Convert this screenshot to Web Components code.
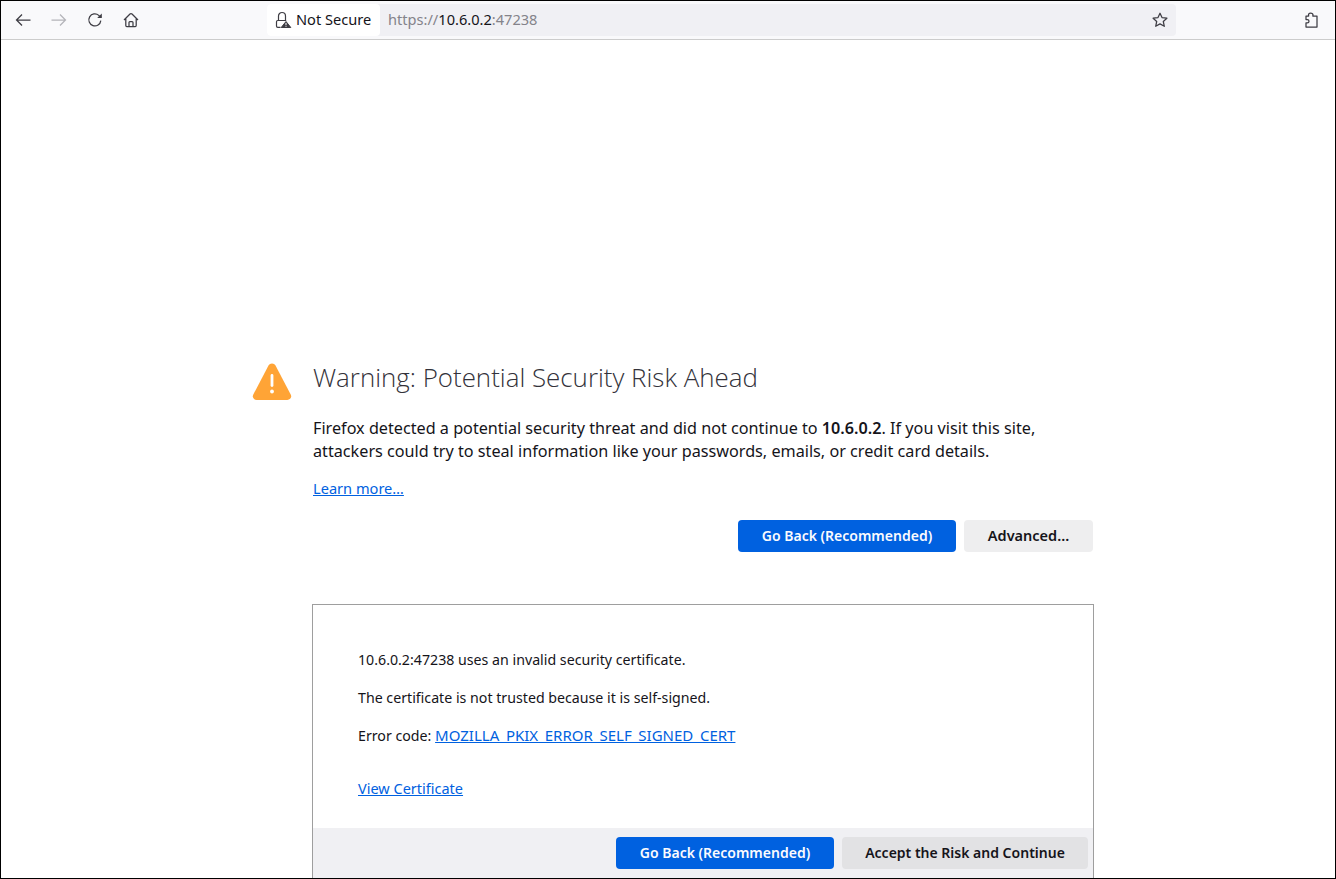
<!DOCTYPE html>
<html>
<head>
<meta charset="utf-8">
<title>Warning: Potential Security Risk Ahead</title>
<style>
    html, body { margin: 0; height: 100%; background: #fff; }
    body { overflow: hidden; }
</style>
</head>
<body>
<browser-window>
    <browser-toolbar></browser-toolbar>
    <warning-page></warning-page>
</browser-window>

<script>
class BrowserWindow extends HTMLElement {
    constructor() {
        super();
        this.attachShadow({mode: 'open'});
        this.shadowRoot.innerHTML = `
<style>
    :host {
        display: flex;
        flex-direction: column;
        box-sizing: border-box;
        height: 879px;
        border: 1px solid #000;
        overflow: hidden;
        background: #fff;
    }
</style>
<slot></slot>`;
    }
}

const toolIcons = {
    back: '<path d="M15.500 8H1.500M7 2.500 1.500 8 7 13.500"/>',
    forward: '<path d="M.5 8h14M9 2.500 14.500 8 9 13.500"/>',
    reload: '<path d="M13.800 8.600A6 6 0 1 1 11.800 3.400L14 5.200"/><path d="M14.800 1.400v4.600H10.200" fill="currentColor" stroke="none"/>',
    home: '<path d="M1 8 7 2a1.400 1.400 0 0 1 2 0l6 6M2.800 6.500v7.100c0 .6.4 1 1 1h8.400c.6 0 1-.4 1-1V6.500"/><path d="M6 14.500v-4c0-.5.4-.9.9-.9h2.200c.5 0 .9.4.9.9v4"/>',
    star: '<path d="M8 1.200 10 5.600 14.900 6.200 11.300 9.500 12.300 14.300 8 11.900 3.700 14.300 4.700 9.500 1.100 6.200 6 5.600Z" stroke-linejoin="round"/>',
    puzzle: '<path d="M7.500 1c-1.200 0-2 .9-2 2 0 .4.1.7.2 1H3v3.600h1.300c1 0 1.700.7 1.700 1.600s-.7 1.600-1.700 1.600H3V15h11V4H9.800c.1-.3.2-.6.2-1 0-1.100-.9-2-2.500-2Z" stroke-linejoin="round"/>'
};

class ToolIcon extends HTMLElement {
    constructor() {
        super();
        this.attachShadow({mode: 'open'});
        const name = this.getAttribute('name');
        this.shadowRoot.innerHTML = `
<style>
    :host {
        display: flex;
        align-items: center;
        justify-content: center;
        width: 16px;
        height: 16px;
        color: #3e3d44;
    }
    :host([disabled]) { color: #b4b4b9; }
    svg { width: 16px; height: 16px; fill: none; stroke: currentColor; stroke-width: 1.25; }
</style>
<svg viewBox="0 0 16 16">${toolIcons[name]}</svg>`;
    }
}

class UrlBar extends HTMLElement {
    constructor() {
        super();
        this.attachShadow({mode: 'open'});
        this.shadowRoot.innerHTML = `
<style>
    :host {
        display: flex;
        align-items: center;
        box-sizing: border-box;
        width: 909px;
        height: 32px;
        margin-left: 128px;
        background: #f0f0f4;
        border-radius: 4px;
        font: 14.600px "Noto Sans", sans-serif;
    }
    .chip {
        display: flex;
        align-items: center;
        box-sizing: border-box;
        width: 113px;
        height: 32px;
        padding-left: 8px;
        gap: 4px;
        background: #fff;
        border-radius: 4px;
        color: #15141a;
        white-space: nowrap;
    }
    .chip svg { width: 17px; height: 17px; flex: none; }
    .chip span, .url { position: relative; top: -1px; }
    .url { margin-left: 8px; color: #84838a; white-space: nowrap; }
    .url b { font-weight: 400; color: #15141a; }
    .star { margin-left: auto; margin-right: 8px; }
</style>
<div class="chip">
    <svg viewBox="0 0 17 17">
        <path d="M5.500 16.400H2.800c-.8 0-1.300-.5-1.300-1.300v-4.300c0-.8.5-1.300 1.300-1.300h8.400" fill="none" stroke="#3e3d44" stroke-width="1.200"/>
        <path d="M3.500 9.500V5a3.500 3.500 0 0 1 7 0v4.500" fill="none" stroke="#3e3d44" stroke-width="1.200"/>
        <path d="M11 10.500 15.800 16.500H6.200z" fill="#3e3d44" stroke="#3e3d44" stroke-linejoin="round"/>
        <path d="M11 12v2.300M11 15v.8" stroke="#fff" stroke-width="1"/>
    </svg>
    <span>Not Secure</span>
</div>
<span class="url">https://<b>10.6.0.2</b>:47238</span>
<tool-icon class="star" name="star"></tool-icon>`;
    }
}

class BrowserToolbar extends HTMLElement {
    constructor() {
        super();
        this.attachShadow({mode: 'open'});
        this.shadowRoot.innerHTML = `
<style>
    :host {
        display: flex;
        align-items: center;
        flex: none;
        box-sizing: border-box;
        height: 39px;
        padding: 0 16px 1px 14px;
        background: #f9f9fb;
        border-bottom: 1px solid #ccc;
    }
    .nav { display: flex; gap: 20px; }
    .ext { margin-left: auto; }
</style>
<div class="nav">
    <tool-icon name="back"></tool-icon>
    <tool-icon name="forward" disabled></tool-icon>
    <tool-icon name="reload"></tool-icon>
    <tool-icon name="home"></tool-icon>
</div>
<url-bar></url-bar>
<tool-icon class="ext" name="puzzle"></tool-icon>`;
    }
}

class ActionButton extends HTMLElement {
    constructor() {
        super();
        this.attachShadow({mode: 'open'});
        this.shadowRoot.innerHTML = `
<style>
    :host {
        display: flex;
        align-items: center;
        justify-content: center;
        box-sizing: border-box;
        height: 32px;
        padding-bottom: 2px;
        border-radius: 4px;
        background: #eeeeef;
        color: #15141a;
        font: 600 14px "Noto Sans", sans-serif;
        white-space: nowrap;
    }
    :host([primary]) { background: #0061e0; color: #fbfbfe; }
    :host([dim]) { background: #e2e2e4; }
</style>
<slot></slot>`;
    }
}

class CertPanel extends HTMLElement {
    constructor() {
        super();
        this.attachShadow({mode: 'open'});
        this.shadowRoot.innerHTML = `
<style>
    :host {
        display: block;
        box-sizing: border-box;
        width: 782px;
        margin: 52px 0 0 60px;
        border: 1px solid #9e9e9e;
        border-bottom: 0;
        font: 14.200px "Noto Sans", sans-serif;
        color: #15141a;
    }
    .body { padding: 46px 45px 0; height: 223px; box-sizing: border-box; }
    p { margin: 0 0 20px; line-height: 18px; }
    a { color: #0061e0; text-decoration: underline; }
    .err { margin-top: -1px; }
    .code { font-size: 15px; }
    .cert { margin-top: 34px; font-size: 14.500px; }
    .foot {
        display: flex;
        justify-content: flex-end;
        gap: 8px;
        height: 50px;
        padding: 9px 5px 0 0;
        box-sizing: border-box;
        background: #f0f0f3;
    }
</style>
<div class="body">
    <p>10.6.0.2:47238 uses an invalid security certificate.</p>
    <p>The certificate is not trusted because it is self-signed.</p>
    <p class="err">Error code: <a class="code" href="#">MOZILLA_PKIX_ERROR_SELF_SIGNED_CERT</a></p>
    <p class="cert"><a href="#">View Certificate</a></p>
</div>
<div class="foot">
    <action-button primary style="width:218px">Go Back (Recommended)</action-button>
    <action-button dim style="width:246px">Accept the Risk and Continue</action-button>
</div>`;
    }
}

class WarningPage extends HTMLElement {
    constructor() {
        super();
        this.attachShadow({mode: 'open'});
        this.shadowRoot.innerHTML = `
<style>
    :host {
        display: block;
        flex: 1;
        box-sizing: border-box;
        padding: 322px 0 0 251px;
        color: #15141a;
        font: 16.200px "Noto Sans", sans-serif;
    }
    .head { display: flex; width: 841px; }
    .icon { width: 40px; height: 40px; flex: none; margin-right: 21px; }
    .text { width: 780px; }
    h1 {
        margin: 0;
        font: 300 25.900px/30px "Open Sans", sans-serif;
        color: #33323a;
    }
    .desc { margin: 25px 0 0; line-height: 23px; }
    .desc b { font-weight: 600; }
    .more { display: block; margin-top: 15px; font-size: 14.600px; line-height: 20px; }
    a { color: #0061e0; text-decoration: underline; }
    .buttons {
        display: flex;
        justify-content: flex-end;
        gap: 8px;
        width: 780px;
        margin-top: 22px;
    }
</style>
<div class="head">
    <svg class="icon" viewBox="0 0 40 40">
        <path d="M20 1.500c-1.500 0-2.800.8-3.500 2.100L1.300 32.500c-1.400 2.700.5 5.500 3.400 5.500h30.600c2.900 0 4.800-2.800 3.400-5.500L23.500 3.600C22.800 2.300 21.500 1.500 20 1.500Z" fill="#ffa436"/>
        <rect x="18.600" y="12" width="2.800" height="13" rx="1.400" fill="#fff"/>
        <circle cx="20" cy="29.500" r="1.900" fill="#fff"/>
    </svg>
    <div class="text">
        <h1>Warning: Potential Security Risk Ahead</h1>
        <p class="desc">Firefox detected a potential security threat and did not continue to <b>10.6.0.2</b>. If you visit this site,<br>attackers could try to steal information like your passwords, emails, or credit card details.</p>
        <a class="more" href="#">Learn more…</a>
        <div class="buttons">
            <action-button primary style="width:218px">Go Back (Recommended)</action-button>
            <action-button style="width:129px;font-size:14.500px">Advanced…</action-button>
        </div>
    </div>
</div>
<cert-panel></cert-panel>`;
    }
}

customElements.define('browser-window', BrowserWindow);
customElements.define('tool-icon', ToolIcon);
customElements.define('url-bar', UrlBar);
customElements.define('browser-toolbar', BrowserToolbar);
customElements.define('action-button', ActionButton);
customElements.define('cert-panel', CertPanel);
customElements.define('warning-page', WarningPage);
</script>
</body>
</html>
